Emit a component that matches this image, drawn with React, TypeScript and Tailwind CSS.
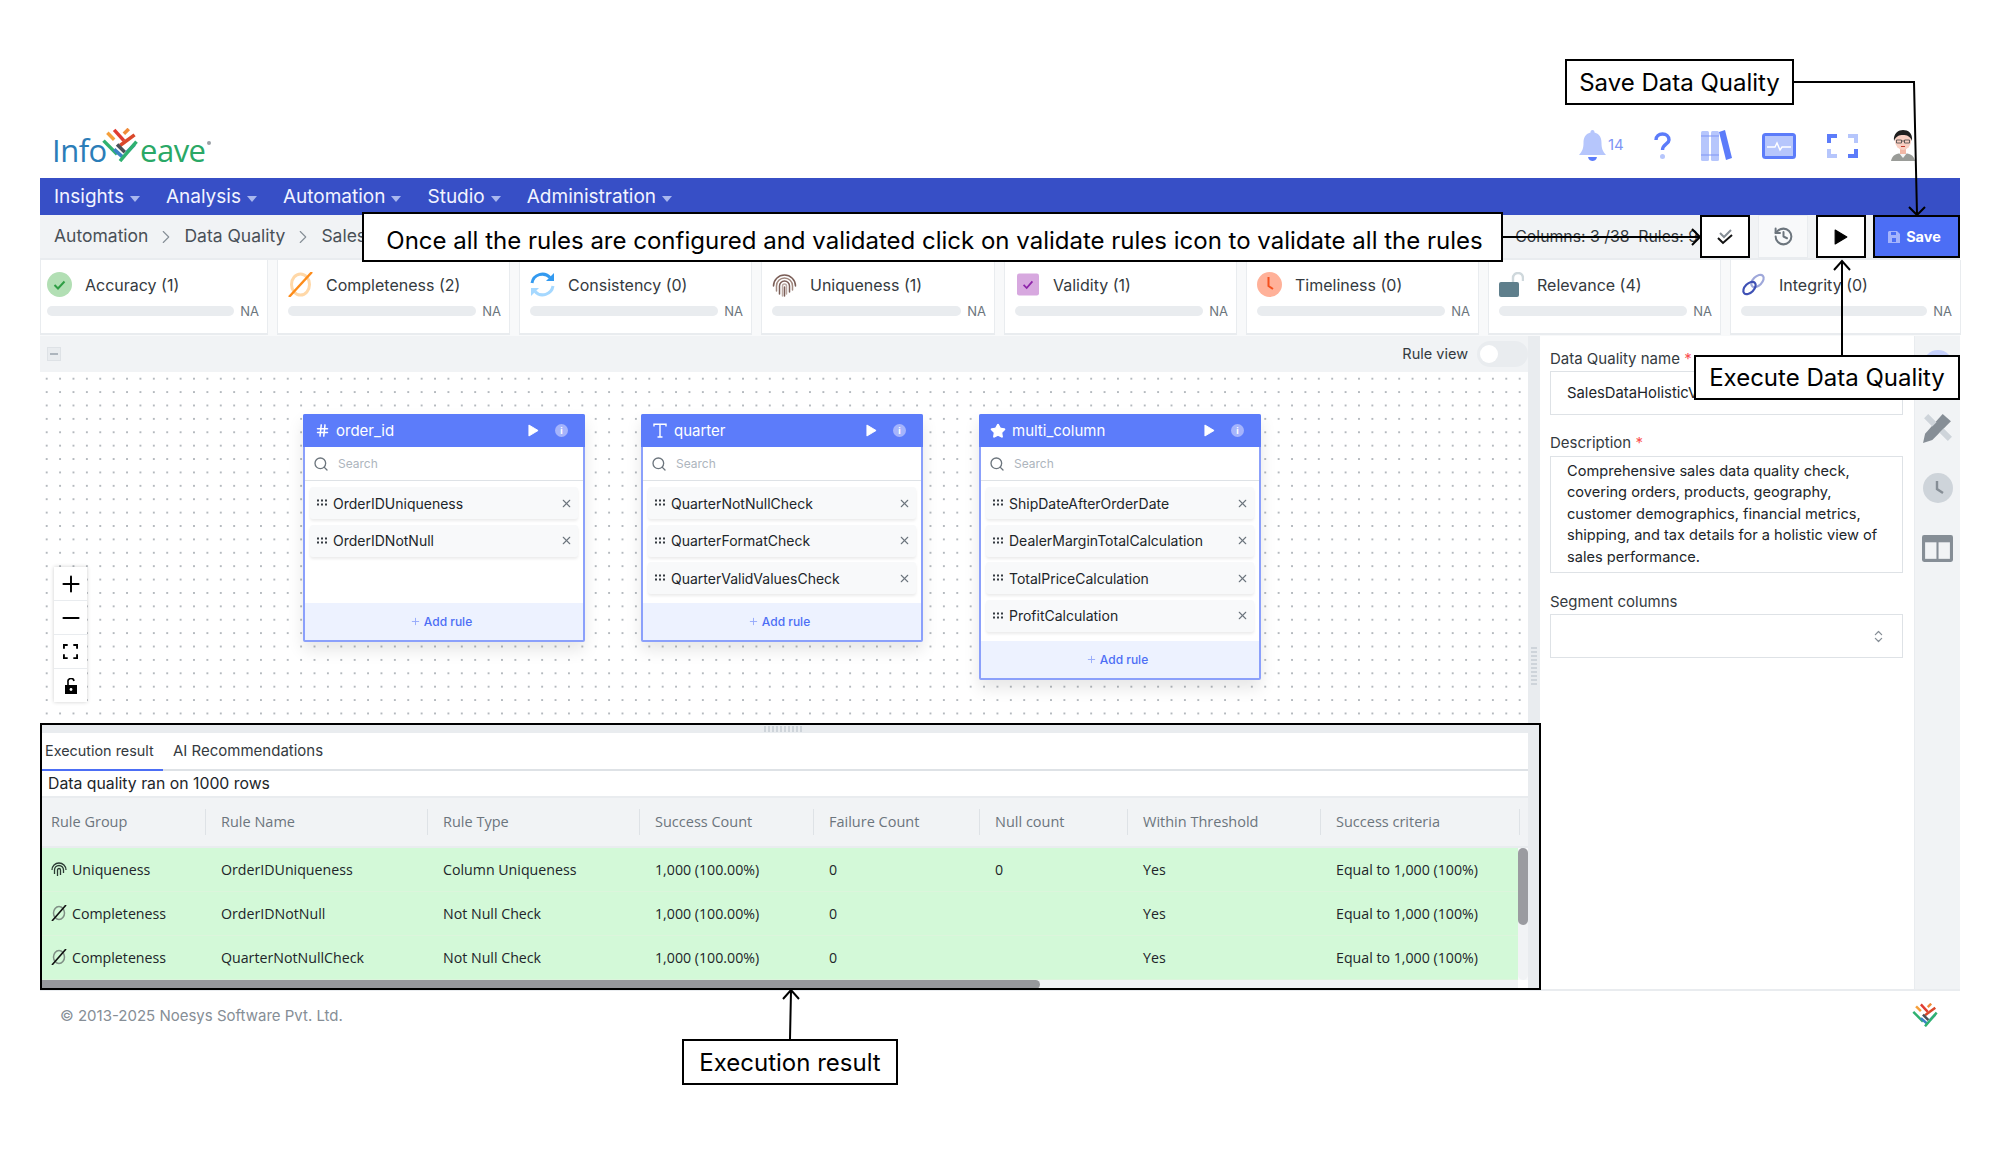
import { ChevronRight, ChevronsUpDown, Hash, History, Minus, Plus, Search, Star, X } from "lucide-react";

const Play = ({ className }: { className: string }) => (
  <svg viewBox="0 0 12 14" className={className}>
    <path d="M1 1 L11 7 L1 13 Z" fill="currentColor" stroke="currentColor" strokeLinejoin="round" />
  </svg>
);

const Dots = () => (
  <svg viewBox="0 0 12 8" className="h-[8px] w-[12px] shrink-0 text-[#343a40]">
    {[1, 5, 9].map((x) => (
      <g key={x}>
        <rect x={x} y="0.5" width="2" height="2" fill="currentColor" />
        <rect x={x} y="4.5" width="2" height="2" fill="currentColor" />
      </g>
    ))}
  </svg>
);

const Mark = ({ className }: { className: string }) => (
  <svg viewBox="0 0 36 35" className={className}>
    <g strokeWidth="3.6" fill="none">
      <path d="M5 5 L12 12" stroke="#f59f3a" />
      <path d="M12 2 L22 13" stroke="#e03c31" />
      <path d="M22 6 L27 1" stroke="#f08c3a" />
      <path d="M33 7 L18 18" stroke="#d9482b" />
      <path d="M1 13 L15 27" stroke="#2fb170" />
      <path d="M15 17 L23 25" stroke="#495057" />
      <path d="M25 25 L33 17" stroke="#4c8fd6" />
      <path d="M12 22 L22 31" stroke="#3b82c4" />
      <path d="M18 34 L35 14" stroke="#2fb170" />
    </g>
  </svg>
);

const tabs = [
  { label: "Accuracy (1)", w: "w-[228px]", px: "pl-[6px] pr-[8px]", icon: (
    <svg viewBox="0 0 25 25" className="h-[25px] w-[25px]"><circle cx="12.5" cy="12.5" r="12.5" fill="#b2dfb4" /><path d="M7.5 13 L11 16.5 L17.5 9.5" stroke="#2f9e44" strokeWidth="2" fill="none" /></svg>
  ) },
  { label: "Completeness (2)", w: "w-[233px]", px: "pl-[10px] pr-[8px]", icon: (
    <svg viewBox="0 0 25 25" className="h-[25px] w-[25px]"><ellipse cx="12.5" cy="12.5" rx="9" ry="10.5" stroke="#ffd8a8" strokeWidth="3" fill="none" /><path d="M1 25 L24 0" stroke="#fd8c1a" strokeWidth="2.4" /></svg>
  ) },
  { label: "Consistency (0)", w: "w-[233px]", px: "pl-[10px] pr-[8px]", icon: (
    <svg viewBox="0 0 25 25" className="h-[25px] w-[25px]"><path d="M2 11 A10.5 10.5 0 0 1 20 5.5" stroke="#339af0" strokeWidth="3" fill="none" /><path d="M24 1 V9 H16 Z" fill="#339af0" /><path d="M23 14 A10.5 10.5 0 0 1 5 19.5" stroke="#a5d8ff" strokeWidth="3" fill="none" /><path d="M1 24 V16 H9 Z" fill="#a5d8ff" /></svg>
  ) },
  { label: "Uniqueness (1)", w: "w-[234px]", px: "pl-[10px] pr-[8px]", icon: (
    <svg viewBox="0 0 25 25" className="h-[27px] w-[25px]" fill="none" stroke="#7b5e57" strokeWidth="1.5" strokeLinecap="round"><path d="M1.5 14 A11 11 0 0 1 23.5 14" /><path d="M4.5 19 V14 A8 8 0 0 1 20.5 14 V18" stroke="#a1887f" /><path d="M7.5 22 V14 A5 5 0 0 1 17.5 14 V20" /><path d="M10.5 24 V14 A2 2 0 0 1 14.5 14 V22" stroke="#bcaaa4" /><path d="M12.5 15 V24" /></svg>
  ) },
  { label: "Validity (1)", w: "w-[233px]", px: "pl-[10px] pr-[8px]", icon: (
    <svg viewBox="0 0 25 25" className="h-[25px] w-[22px]"><rect width="25" height="25" rx="2.5" fill="#d7a8df" /><path d="M7.5 13 L11 16.5 L17.5 9" stroke="#8e24aa" strokeWidth="2" fill="none" /></svg>
  ) },
  { label: "Timeliness (0)", w: "w-[233px]", px: "pl-[10px] pr-[8px]", icon: (
    <svg viewBox="0 0 25 25" className="h-[25px] w-[25px]"><circle cx="12.5" cy="12.5" r="12.5" fill="#ffb199" /><path d="M11.5 5 V14 L16 17" stroke="#f4511e" strokeWidth="2" fill="none" /></svg>
  ) },
  { label: "Relevance (4)", w: "w-[233px]", px: "pl-[10px] pr-[8px]", icon: (
    <svg viewBox="0 0 25 25" className="h-[25px] w-[25px]"><rect x="0" y="10" width="20" height="15" rx="2" fill="#5f7f8c" /><path d="M14 10 V6 A5 5 0 0 1 24 6 V9" stroke="#cfd8dc" strokeWidth="2.4" fill="none" /></svg>
  ) },
  { label: "Integrity (0)", w: "w-[231px]", px: "pl-[10px] pr-[8px]", icon: (
    <svg viewBox="0 0 25 25" className="h-[25px] w-[25px]" fill="none" strokeWidth="2.2"><ellipse cx="16.5" cy="9" rx="7.5" ry="4.5" transform="rotate(-45 16.5 9)" stroke="#9fa8da" /><ellipse cx="8.5" cy="16" rx="7.5" ry="4.5" transform="rotate(-45 8.5 16)" stroke="#3f51b5" /></svg>
  ) },
];

const nodes = [
  { name: "order_id", icon: <Hash className="h-[15px] w-[15px] text-white" strokeWidth={2.4} />, left: "left-[263px]", rules: ["OrderIDUniqueness", "OrderIDNotNull"], h: "h-[228px]" },
  { name: "quarter", icon: (
    <svg viewBox="0 0 14 15" className="h-[15px] w-[14px]" fill="none" stroke="#fff" strokeWidth="1.4"><path d="M1 3.5 V1.2 H13 V3.5 M7 1.2 V14 M4.5 14 H9.5" /></svg>
  ), left: "left-[601px]", rules: ["QuarterNotNullCheck", "QuarterFormatCheck", "QuarterValidValuesCheck"], h: "h-[228px]" },
  { name: "multi_column", icon: <Star className="h-[16px] w-[16px] text-white" fill="currentColor" />, left: "left-[939px]", rules: ["ShipDateAfterOrderDate", "DealerMarginTotalCalculation", "TotalPriceCalculation", "ProfitCalculation"], h: "h-[266px]" },
];

const columns = ["Rule Group", "Rule Name", "Rule Type", "Success Count", "Failure Count", "Null count", "Within Threshold", "Success criteria"];

const rows = [
  ["Uniqueness", "OrderIDUniqueness", "Column Uniqueness", "1,000 (100.00%)", "0", "0", "Yes", "Equal to 1,000 (100%)"],
  ["Completeness", "OrderIDNotNull", "Not Null Check", "1,000 (100.00%)", "0", "", "Yes", "Equal to 1,000 (100%)"],
  ["Completeness", "QuarterNotNullCheck", "Not Null Check", "1,000 (100.00%)", "0", "", "Yes", "Equal to 1,000 (100%)"],
];

const grid = "grid grid-cols-[166px_222px_212px_174px_166px_148px_193px_199px]";

export default function App() {
  return (
    <div className="relative h-[1160px] w-[2000px] overflow-hidden bg-white font-['Inter',sans-serif] text-[#212529]">
      {/* top bar */}
      <div className="flex h-[178px] items-end justify-between pl-[52px] pr-[85px]">
        <div className="mb-[11px] flex h-[37px] items-end font-['Open_Sans',sans-serif] text-[31px] font-medium leading-[34px] tracking-[-0.5px]">
          <span className="w-[50px] text-[#2b7db8]">Info</span>
          <Mark className="mb-[5px] h-[34px] w-[36px]" />
          <span className="ml-[2px] text-[#2aa866]">eave</span>
          <span className="mb-[22px] ml-[1px] h-[4px] w-[4px] rounded-full bg-[#9aa0a6]" />
        </div>
        <div className="mb-[17px] flex items-center">
          <svg viewBox="0 0 27 31" className="h-[31px] w-[27px]">
            <path d="M13.5 0 C15 0 15.5 1 15.5 2.5 C21 4 22.5 8 22.5 13 C22.5 18 23.5 21 27 25 H0 C3.5 21 4.5 18 4.5 13 C4.5 8 6 4 11.5 2.5 C11.5 1 12 0 13.5 0 Z" fill="#b6c6fc" />
            <path d="M9 27 H18 C17.5 30 15 31 13.5 31 C12 31 9.5 30 9 27 Z" fill="#5c7cfa" />
          </svg>
          <span className="ml-[2px] w-[15px] text-[15px] text-[#7f95f5]">14</span>
          <svg viewBox="0 0 17 27" className="ml-[31px] h-[27px] w-[17px]" fill="none">
            <path d="M2 8 C2 4 5 2 8.5 2 C12 2 15 4 15 8 C15 12 8.5 12 8.5 18" stroke="#5c7cfa" strokeWidth="3.4" />
            <circle cx="8.5" cy="24.5" r="2.5" fill="#b6c6fc" />
          </svg>
          <svg viewBox="0 0 31 31" className="ml-[30px] h-[31px] w-[31px]">
            <rect x="0" y="1" width="8" height="30" rx="1.5" fill="#b6c6fc" />
            <rect x="10" y="1" width="8" height="30" rx="1.5" fill="#b6c6fc" />
            <path d="M0 6 H18 M0 25 H18" stroke="#7f95f5" strokeWidth="1" />
            <path d="M18 2 L24 0 L31 28 L25 30 Z" fill="#5c7cfa" />
          </svg>
          <svg viewBox="0 0 34 26" className="ml-[30px] h-[26px] w-[34px]">
            <rect width="34" height="26" rx="3.5" fill="#5c7cfa" />
            <rect x="3" y="3" width="28" height="20" fill="#b6c6fc" />
            <path d="M5 14 H13 L15 10 L18 17 L20 14 H29" stroke="#fff" strokeWidth="1.4" fill="none" />
          </svg>
          <svg viewBox="0 0 31 24" className="ml-[31px] h-[24px] w-[31px]" fill="none" strokeWidth="4">
            <path d="M10 2 H2 V9" stroke="#5c7cfa" />
            <path d="M21 2 H29 V9" stroke="#b6c6fc" />
            <path d="M10 22 H2 V15" stroke="#b6c6fc" />
            <path d="M21 22 H29 V15" stroke="#5c7cfa" />
          </svg>
          <svg viewBox="0 0 24 31" className="ml-[33px] h-[31px] w-[24px]">
            <path d="M0 31 C1 25 6 23 12 23 C18 23 23 25 24 31 Z" fill="#9a9c98" />
            <path d="M8 23 L12 28 L16 23 Z" fill="#f5f5f5" />
            <rect x="9" y="17" width="6" height="7" fill="#f2b8a6" />
            <ellipse cx="12" cy="11" rx="8" ry="9" fill="#f9cfc2" />
            <path d="M3 11 C2 3 8 0 12 0 C17 0 22 3 21 11 C19 6 16 5 12 5 C8 5 5 6 3 11 Z" fill="#1f1f1f" />
            <path d="M5.5 10 H10.5 V13 H5.5 Z M13.5 10 H18.5 V13 H13.5 Z M10.5 11 H13.5" stroke="#444" strokeWidth="0.8" fill="none" />
            <path d="M10 16.5 H14" stroke="#c0392b" strokeWidth="1" />
          </svg>
        </div>
      </div>

      {/* nav */}
      <div className="mx-[40px] flex h-[37px] items-center bg-[#374fc6] pl-[14px] pt-[1px] text-[19px] text-[#f2f4ff]">
        {["Insights", "Analysis", "Automation", "Studio", "Administration"].map((item) => (
          <div key={item} className="mr-[26px] flex items-center gap-[6px]">
            <span>{item}</span>
            <span className="mt-[3px] h-0 w-0 border-x-[5px] border-t-[6px] border-x-transparent border-t-[#a9b7ee]" />
          </div>
        ))}
      </div>

      {/* breadcrumb and actions */}
      <div className="mx-[40px] flex h-[45px] items-center border-b-2 border-[#e9ecef] bg-[#f1f3f5] pl-[14px] text-[17.5px] text-[#495057]">
        <span>Automation</span>
        <ChevronRight className="mx-[7px] h-[22px] w-[22px] text-[#868e96]" strokeWidth={1.2} />
        <span>Data Quality</span>
        <ChevronRight className="mx-[7px] h-[22px] w-[22px] text-[#868e96]" strokeWidth={1.2} />
        <span>Sales</span>
        <div className="ml-auto flex h-[43px] items-center">
          <span className="mr-[2px] pt-[1px] text-[15.8px] text-[#343a40]">Columns: 3 /38&nbsp; Rules: 9</span>
          <div className="flex h-[43px] w-[50px] items-center justify-center border-2 border-black bg-white">
            <svg viewBox="0 0 16 16" className="h-[16px] w-[16px]" fill="none" strokeWidth="2">
              <path d="M3 4 L7 8 L14 1" stroke="#868e96" />
              <path d="M1 9 L6 14 L15 6" stroke="#111" />
            </svg>
          </div>
          <div className="ml-[8px] flex h-[43px] w-[50px] items-center justify-center border border-[#e9ecef] bg-[#f8f9fa]">
            <History className="h-[21px] w-[21px] text-[#6c757d]" strokeWidth={2.3} />
          </div>
          <div className="ml-[8px] flex h-[43px] w-[50px] items-center justify-center border-2 border-black bg-white">
            <Play className="h-[18px] w-[14px] text-black" />
          </div>
          <div className="ml-[7px] flex h-[43px] w-[87px] items-center justify-center gap-[6px] border-2 border-black bg-[#4c6ef5] pr-[4px] text-[14.5px] font-bold text-white">
            <svg viewBox="0 0 12 12" className="h-[12px] w-[12px]">
              <path d="M1 0 H9 L12 3 V12 H0 V1 Z" fill="#a5b4fc" />
              <rect x="4" y="7" width="4" height="4" fill="#4c6ef5" />
              <rect x="3" y="1" width="5" height="3" fill="#4c6ef5" />
            </svg>
            Save
          </div>
        </div>
      </div>

      {/* rule group tabs */}
      <div className="mx-[40px] flex h-[76px] gap-[9px] bg-[#f8f9fa]">
        {tabs.map((t) => (
          <div key={t.label} className={`${t.w} ${t.px} h-[75px] shrink-0 border-x border-b-2 border-[#e9ecef] bg-white pt-[12px]`}>
            <div className="flex h-[25px] items-center gap-[13px] text-[16px] text-[#343a40]">
              <span className="flex w-[25px] shrink-0 justify-center">{t.icon}</span>
              <span className="whitespace-nowrap">{t.label}</span>
            </div>
            <div className="mt-[7px] flex items-center gap-[6px]">
              <div className="h-[10px] flex-1 rounded-full bg-[#e9ecef]" />
              <span className="text-[13px] leading-[14px] text-[#6c757d]">NA</span>
            </div>
          </div>
        ))}
      </div>

      {/* workspace */}
      <div className="mx-[40px] flex h-[654px]">
        <div className="flex w-[1488px] flex-col">
          <div className="flex h-[36px] items-center bg-[#f1f3f5] pl-[7px] text-[14.5px] text-[#343a40]">
            <div className="flex h-[14px] w-[14px] items-center justify-center border border-[#dee2e6] bg-[#e9ecef]">
              <div className="h-[2px] w-[8px] bg-[#adb5bd]" />
            </div>
            <span className="ml-auto">Rule view</span>
            <div className="ml-[9px] flex h-[26px] w-[51px] items-center rounded-full bg-[#e9ecef] pl-[3px]">
              <div className="h-[18px] w-[18px] rounded-full bg-white" />
            </div>
          </div>
          <div className="relative h-[353px] bg-white bg-[radial-gradient(#b4b9be_0.7px,transparent_0.9px)] bg-[size:13.4px_13.4px]">
            <div className="absolute left-[14px] top-[195px] flex w-[33px] flex-col bg-white shadow-[0_0_4px_rgba(0,0,0,0.2)]">
              <div className="flex h-[34px] items-center justify-center border-b border-[#e9ecef]"><Plus className="h-[26px] w-[26px] text-black" strokeWidth={1.8} /></div>
              <div className="flex h-[34px] items-center justify-center border-b border-[#e9ecef]"><Minus className="h-[26px] w-[26px] text-black" strokeWidth={1.8} /></div>
              <div className="flex h-[34px] items-center justify-center border-b border-[#e9ecef]">
                <svg viewBox="0 0 16 16" className="h-[15px] w-[15px]" fill="none" stroke="#000" strokeWidth="2"><path d="M1 5 V1 H5 M11 1 H15 V5 M1 11 V15 H5 M11 15 H15 V11" /></svg>
              </div>
              <div className="flex h-[33px] items-center justify-center">
                <svg viewBox="0 0 12 16" className="h-[16px] w-[12px]"><path d="M0 7 H12 V16 H0 Z" fill="#000" /><path d="M3 7 V4 A3 3 0 0 1 9 3" stroke="#000" strokeWidth="1.6" fill="none" /><circle cx="6" cy="11.5" r="1.4" fill="#fff" /></svg>
              </div>
            </div>
            {nodes.map((n) => (
              <div key={n.name} className={`${n.left} ${n.h} absolute top-[42px] flex w-[282px] flex-col rounded-[2px] border-2 border-[#8ba0fb] bg-white shadow-[0_8px_16px_rgba(0,0,0,0.1)]`}>
                <div className="mx-[-2px] mt-[-2px] flex h-[33px] shrink-0 items-center rounded-t-[2px] bg-[#5c7cfa] pl-[11px] pr-[17px] text-[15px] text-white">
                  <span className="flex w-[16px] justify-center">{n.icon}</span>
                  <span className="ml-[6px] pt-[1px]">{n.name}</span>
                  <Play className="ml-auto h-[13px] w-[11px] text-white" />
                  <span className="ml-[16px] flex h-[13px] w-[13px] items-center justify-center rounded-full bg-[#a5b4fc] text-[9px] font-bold leading-none text-white">i</span>
                </div>
                <div className="flex h-[34px] shrink-0 items-center border-b border-[#dee2e6] pl-[8px] text-[12px] text-[#adb5bd]">
                  <Search className="h-[16px] w-[16px] text-[#6c757d]" />
                  <span className="ml-[9px]">Search</span>
                </div>
                <div className="flex flex-1 flex-col gap-[5.6px] px-[5px] pt-[6px]">
                  {n.rules.map((r) => (
                    <div key={r} className="flex h-[32px] items-center gap-[5px] rounded-[3px] bg-[#f8f9fa] pl-[6px] pr-[5px] text-[14px] text-[#212529] shadow-[0_2px_3px_rgba(0,0,0,0.08)]">
                      <Dots />
                      <span className="whitespace-nowrap">{r}</span>
                      <X className="ml-auto h-[13px] w-[13px] text-[#6c757d]" />
                    </div>
                  ))}
                </div>
                <div className="flex h-[37px] shrink-0 items-center justify-center gap-[3px] bg-[#edf2ff] pr-[6px] text-[12px] font-medium text-[#4c6ef5]">
                  <Plus className="h-[11px] w-[11px] text-[#94a9fb]" />
                  Add rule
                </div>
              </div>
            ))}
          </div>

          {/* execution result */}
          <div className="flex h-[264px] flex-col bg-white">
            <div className="flex h-[8px] shrink-0 items-center justify-center bg-[#e9ecef]">
              <div className="h-[6px] w-[40px] bg-[repeating-linear-gradient(90deg,#ced4da_0_2px,transparent_2px_4px)]" />
            </div>
            <div className="flex h-[38px] shrink-0 border-b-2 border-[#dee2e6] text-[#343a40]">
              <div className="mb-[-2px] flex w-[123px] items-center border-b-2 border-[#4c6ef5] pl-[5px] text-[14.4px]">Execution result</div>
              <div className="ml-[10px] flex items-center text-[15px]">AI Recommendations</div>
            </div>
            <div className="flex h-[25px] shrink-0 items-center pl-[8px] pt-[1px] text-[15.8px] text-[#212529]">Data quality ran on 1000 rows</div>
            <div className={`${grid} h-[52px] shrink-0 items-center border-y-2 border-[#e9ecef] bg-[#f1f3f5] font-['Open_Sans',sans-serif] text-[14.5px] text-[#6c757d]`}>
              {columns.map((c, i) => (
                <div key={c} className={`flex h-[26px] items-center border-r border-[#dee2e6] ${i === 0 ? "pl-[11px]" : "pl-[15px]"}`}>{c}</div>
              ))}
            </div>
            <div className="relative flex h-[132px] shrink-0 flex-col bg-[#f8f9fa]">
              {rows.map((r, i) => (
                <div key={i} className={`${grid} h-[44px] w-[1478px] items-center border-b border-[#dcf5dc] bg-[#d3f9d8] font-['Open_Sans',sans-serif] text-[14.2px] text-[#212529]`}>
                  {r.map((v, j) => (
                    <div key={j} className={`flex items-center gap-[5px] ${j === 0 ? "pl-[11px]" : "pl-[15px]"}`}>
                      {j === 0 && (v === "Uniqueness" ? (
                        <svg viewBox="0 0 16 16" className="h-[16px] w-[16px]" fill="none" stroke="#2b3a33" strokeWidth="1.3"><path d="M1 9 A7 7 0 0 1 15 9" /><path d="M3.5 13 V9 A4.5 4.5 0 0 1 12.5 9 V12" /><path d="M6.5 15 V9 A1.5 1.5 0 0 1 9.5 9 V14" /></svg>
                      ) : (
                        <svg viewBox="0 0 16 16" className="h-[16px] w-[16px]" fill="none"><ellipse cx="8" cy="8" rx="5.5" ry="6.5" stroke="#7f8f85" strokeWidth="1.5" /><path d="M1 16 L15 0" stroke="#111" strokeWidth="1.6" /></svg>
                      ))}
                      <span className="whitespace-nowrap">{v}</span>
                    </div>
                  ))}
                </div>
              ))}
              <div className="absolute right-0 top-0 h-[132px] w-[10px] rounded-full bg-[#f1f3f5]">
                <div className="h-[77px] w-[10px] rounded-full bg-[#9a9ba0]" />
              </div>
            </div>
            <div className="h-[9px] w-[1478px] shrink-0 bg-[#f1f3f5]">
              <div className="h-[9px] w-[1000px] rounded-r-full bg-[#97989c]" />
            </div>
          </div>
        </div>

        {/* splitter */}
        <div className="flex w-[12px] shrink-0 items-end justify-center bg-[#e9ecef] pb-[305px]">
          <div className="h-[38px] w-[6px] bg-[repeating-linear-gradient(0deg,#ced4da_0_2px,transparent_2px_4px)]" />
        </div>

        {/* properties */}
        <div className="w-[374px] shrink-0 border-b border-[#e9ecef] bg-white pl-[10px] pr-[11px] pt-[12px] text-[15px] text-[#343a40]">
          <div className="h-[23px]">Data Quality name <span className="text-[#fa5252]">*</span></div>
          <div className="flex h-[44px] items-center overflow-hidden border border-[#dee2e6] pl-[16px] text-[14.8px] text-[#212529]">SalesDataHolisticView</div>
          <div className="mt-[17px] h-[24px]">Description <span className="text-[#fa5252]">*</span></div>
          <div className="h-[117px] whitespace-nowrap border border-[#dee2e6] pl-[16px] pt-[4px] text-[14.6px] leading-[21.4px] text-[#212529]">
            Comprehensive sales data quality check,<br />
            covering orders, products, geography,<br />
            customer demographics, financial metrics,<br />
            shipping, and tax details for a holistic view of<br />
            sales performance.
          </div>
          <div className="mt-[18px] h-[23px]">Segment columns</div>
          <div className="flex h-[44px] items-center justify-end border border-[#dee2e6] pr-[16px]">
            <ChevronsUpDown className="h-[15px] w-[15px] text-[#868e96]" />
          </div>
        </div>

        {/* rail */}
        <div className="flex w-[46px] shrink-0 flex-col items-center border-b border-l border-[#e9ecef] bg-[#f1f3f5] pt-[14px]">
          <div className="h-[30px] w-[30px] rounded-full bg-[#c5d0fb]" />
          <svg viewBox="0 0 30 30" className="mt-[32px] h-[31px] w-[31px]" fill="#868e96">
            <path d="M20 2 L28 9 L10 27 L1 30 L3 21 Z" />
            <path d="M2 6 L6 2 L14 10 L10 14 Z M17 20 L21 16 L29 24 L25 28 Z" fill="#ced4da" />
          </svg>
          <div className="relative mt-[30px] h-[30px] w-[30px] rounded-full bg-[#ced4da]">
            <svg viewBox="0 0 30 30" className="h-[30px] w-[30px]" fill="none" stroke="#868e96" strokeWidth="2.4"><path d="M14 8 V16 L20 20" /></svg>
          </div>
          <svg viewBox="0 0 30 26" className="mt-[32px] h-[27px] w-[31px]">
            <rect width="30" height="26" rx="2" fill="#868e96" />
            <rect x="3" y="7" width="11" height="16" fill="#f1f3f5" />
            <rect x="16" y="7" width="11" height="16" fill="#f1f3f5" />
          </svg>
        </div>
      </div>

      {/* footer */}
      <div className="mx-[40px] flex h-[50px] items-center justify-between border-t border-[#e9ecef] pl-[20px] pr-[22px] pt-[1px] text-[15px] text-[#868e96]">
        <span>© 2013-2025 Noesys Software Pvt. Ltd.</span>
        <Mark className="mb-[3px] h-[24px] w-[26px]" />
      </div>

      {/* annotations */}
      <svg viewBox="0 0 2000 1160" className="pointer-events-none absolute left-0 top-0 h-[1160px] w-[2000px]" fill="none" stroke="#000" strokeWidth="2">
        <path d="M1794 82 H1914 L1917 214 M1909 207 L1917 215 L1925 207" />
        <path d="M1502 237 H1699 M1692 229 L1700 237 L1692 245" />
        <path d="M1842 355 V262 M1834 270 L1842 261 L1850 270" />
        <path d="M790 1039 L791 991 M783 999 L791 990 L799 999" />
      </svg>
      <div className="pointer-events-none absolute left-[40px] top-[723px] h-[267px] w-[1501px] border-2 border-black" />
      <div className="absolute left-[362px] top-[212px] flex h-[50px] w-[1141px] items-center justify-center whitespace-nowrap border-2 border-black bg-white pl-[4px] pt-[8px] text-[24px] text-black">
        Once all the rules are configured and validated click on validate rules icon to validate all the rules
      </div>
      <div className="absolute left-[1565px] top-[59px] flex h-[46px] w-[229px] items-center justify-center border-2 border-black bg-white pt-[2px] text-[24px] text-black">Save Data Quality</div>
      <div className="absolute left-[1694px] top-[355px] flex h-[45px] w-[266px] items-center justify-center border-2 border-black bg-white text-[24px] text-black">Execute Data Quality</div>
      <div className="absolute left-[682px] top-[1039px] flex h-[46px] w-[216px] items-center justify-center border-2 border-black bg-white pt-[2px] text-[24px] text-black">Execution result</div>
    </div>
  );
}
